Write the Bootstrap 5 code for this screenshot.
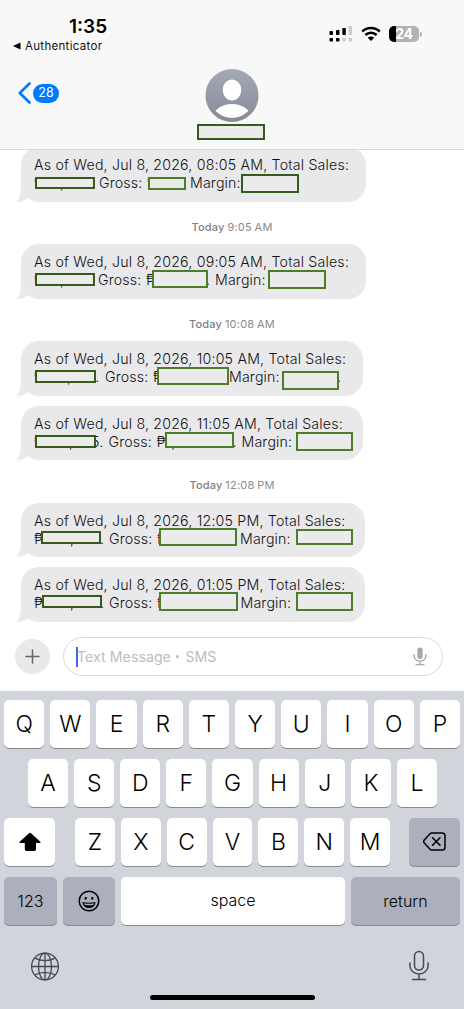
<!DOCTYPE html>
<html lang="en">
<head>
<meta charset="utf-8">
<meta name="viewport" content="width=device-width, initial-scale=1">
<title>Messages</title>
<link href="https://cdn.jsdelivr.net/npm/bootstrap@5.3.0/dist/css/bootstrap.min.css" rel="stylesheet">
<style>
body{font-family:Inter,"Liberation Sans",sans-serif;color:#111;background:#fff;width:464px;height:1009px;overflow:hidden}
svg{display:block;flex:none}
.top-bar{height:150px;background:#f8f8f8;border-bottom:1px solid #d9d9db;z-index:2}
.status{height:56px;padding:18px 42px 0 69px}
.clock{font-size:19px;font-weight:600;line-height:18px;letter-spacing:0;color:#000}
.back-app{font-size:11.5px;line-height:12px;letter-spacing:.3px;margin-left:-56px;margin-top:4px;color:#111;white-space:nowrap}
.battery{width:30px;height:16px;border-radius:5px;background:linear-gradient(90deg,#000 7px,#b2b2b4 7px);color:#fff;font-weight:700;font-size:14px;line-height:16px;letter-spacing:-.2px}
.battery-tip{width:2px;height:5px;border-radius:0 2px 2px 0;background:#b2b2b4;margin-left:1px;margin-top:-14px}
.unread{width:26px;height:19px;background:#007aff;color:#fff;font-size:12.5px;border-radius:10px}
.head-row{height:94px;padding:12px 18px 0}
.mask{border:2px solid #4e7d29;background:#ebebeb}
.mask.dark{border-color:#375a1d}
.name-mask{width:68px;height:16px;margin-top:1.5px;margin-right:1px}
.thread{height:477px;margin-top:-3px}
.bubble{background:#e9e9eb;border-radius:18px;height:54.5px;margin-left:21px;padding:9px 0 0 13px;font-size:14.2px;font-weight:350;line-height:18px;color:#111;white-space:nowrap}
.bubble .mask{position:absolute;left:var(--x);top:var(--y);width:var(--w);height:var(--h)}
.bubble .tail{position:absolute;left:-5px;bottom:0}
.first-line{width:max-content;letter-spacing:var(--ls,.19px)}
.seg{width:var(--w);flex:none;letter-spacing:.15px}
.stamp{font-size:11px;line-height:14px;color:#8a8a8e;text-align:center;height:42.5px;padding-top:18.4px;letter-spacing:.2px;word-spacing:-.5px}
.stamp b{font-weight:500;color:#808085}
.composer{height:64px;padding:10px 21px 0 15px;margin-top:3px}
.plus{width:35px;height:35px;background:#e9e9eb;margin-top:2px}
.field{width:380px;height:39px;border:1px solid #d9d9dc;border-radius:20px;padding:0 15px 0 12px;color:#bdbdc0;font-size:14.2px;margin-left:13px;letter-spacing:.02px}
.caret{width:2px;height:20px;background:#3f68f5;margin-right:-1px}
.dot{width:3px;height:3px;border-radius:50%;background:#bdbdc0;margin:0 6px 0 5.5px}
.keys{height:318px;background:#d1d4db;padding:9px 4px 0}
.key-row{height:47.5px;margin-bottom:11.6px;gap:6px}
.keycap{flex:1 1 0;height:47.5px;border-radius:5px;background:#fff;box-shadow:0 1px 0 #898a8d;font-size:23px;font-weight:300;color:#000;display:flex;align-items:center;justify-content:center}
.keycap.fn{background:#abb0bc;flex:none}
.keycap.word{font-size:16px;font-weight:350}
.keycap.space-bar{padding-bottom:2px}
.home{width:165px;height:5px;border-radius:3px;background:#000;margin:13.5px auto 0}
</style>
</head>
<body class="d-flex flex-column">
<header class="top-bar position-relative flex-shrink-0">
  <div class="status d-flex justify-content-between">
    <div>
      <div class="clock">1:35</div>
      <div class="back-app d-flex align-items-center"><svg width="8" height="8" viewBox="0 0 8 8" class="me-1"><path d="M0 4L7.5.5v7z" fill="#000"/></svg>Authenticator</div>
    </div>
    <div class="d-flex align-items-start pt-2">
      <svg width="24" height="16" viewBox="0 0 24 16"><g fill="#000"><rect x=".5" y="5" width="3.500" height="4" rx=".7"/><rect x="7" y="4" width="3.500" height="5" rx=".7"/><rect x="13.3" y="2" width="3.500" height="7" rx=".7"/><rect x=".5" y="12" width="3.500" height="3.500" rx=".7"/><rect x="7" y="12" width="3.500" height="3.500" rx=".7"/></g><g fill="#ccc"><rect x="19.6" y="0" width="3.500" height="9" rx=".7"/><rect x="13.3" y="12" width="3.500" height="3.500" rx=".7"/><rect x="19.6" y="12" width="3.500" height="3.500" rx=".7"/></g></svg>
      <svg class="mx-2" width="20" height="16" viewBox="0 0 20 16"><g fill="none" stroke="#000" stroke-width="2.500"><path d="M1.200 5.500a12.500 12.500 0 0 1 17.600 0"/><path d="M4.400 9a8 8 0 0 1 11.200 0"/></g><path d="M6.800 11.800a4.600 4.600 0 0 1 6.400 0L10 15z"/></svg>
      <div class="battery text-center">24</div><div class="battery-tip align-self-center"></div>
    </div>
  </div>
  <div class="head-row d-flex">
    <div class="d-flex align-items-center" style="height:50px;width:179px">
      <svg width="15" height="24" viewBox="0 0 15 24"><path d="M11.500 2.500L1.800 12l9.700 9.500" fill="none" stroke="#007aff" stroke-width="2.600" stroke-linecap="round" stroke-linejoin="round"/></svg>
      <span class="unread d-flex align-items-center justify-content-center">28</span>
    </div>
    <div class="d-flex flex-column align-items-center">
      <svg width="54" height="54" viewBox="0 0 54 54"><defs><linearGradient id="av" x2="0" y2="1"><stop stop-color="#a4a9b7"/><stop offset="1" stop-color="#858a96"/></linearGradient><clipPath id="inner"><circle cx="27" cy="27.300" r="22.700"/></clipPath></defs><circle cx="27" cy="27.500" r="26.500" fill="url(#av)"/><g fill="#fff"><ellipse cx="27" cy="22" rx="9.300" ry="10.500"/><ellipse cx="27" cy="49" rx="18.500" ry="13" clip-path="url(#inner)"/></g></svg>
      <div class="mask dark name-mask"></div>
    </div>
  </div>
</header>
<main class="thread flex-shrink-0">
  <div class="bubble position-relative" style="width:345px">
    <svg class="tail" width="24" height="18" viewBox="0 0 24 18"><path d="M5 0C5 10 4 15 0 17.800c5 .4 9-1 12-4L16 8z" fill="#e9e9eb"/></svg>
    <div class="first-line">As of Wed, Jul 8, 2026, 08:05 AM, Total Sales:</div>
    <div class="d-flex"><span class="seg" style="--w:26px">₱</span><span class="seg" style="--w:39px">,</span><span class="seg" style="--w:48px">Gross:</span><span class="seg" style="--w:43px">₱</span><span class="seg" style="--w:107px">Margin:</span></div>
    <i class="mask dark" style="--x:14px;--y:30px;--w:60px;--h:12px"></i><i class="mask" style="--x:127px;--y:30px;--w:38px;--h:13px"></i><i class="mask dark" style="--x:220px;--y:27px;--w:58px;--h:19px"></i>
  </div>
  <div class="stamp"><b>Today</b> 9:05 AM</div>
  <div class="bubble position-relative" style="width:345px">
    <svg class="tail" width="24" height="18" viewBox="0 0 24 18"><path d="M5 0C5 10 4 15 0 17.800c5 .4 9-1 12-4L16 8z" fill="#e9e9eb"/></svg>
    <div class="first-line">As of Wed, Jul 8, 2026, 09:05 AM, Total Sales:</div>
    <div class="d-flex"><span class="seg" style="--w:26px">₱</span><span class="seg" style="--w:38px">,</span><span class="seg" style="--w:48px">Gross:</span><span class="seg" style="--w:60px">₱</span><span class="seg" style="--w:9px">.</span><span class="seg">Margin:</span></div>
    <i class="mask dark" style="--x:14px;--y:29px;--w:60px;--h:13px"></i><i class="mask" style="--x:131px;--y:26px;--w:56px;--h:18px"></i><i class="mask" style="--x:247px;--y:26px;--w:57.5px;--h:19px"></i>
  </div>
  <div class="stamp"><b>Today</b> 10:08 AM</div>
  <div class="bubble position-relative" style="width:342px">
    <svg class="tail" width="24" height="18" viewBox="0 0 24 18"><path d="M5 0C5 10 4 15 0 17.800c5 .4 9-1 12-4L16 8z" fill="#e9e9eb"/></svg>
    <div class="first-line">As of Wed, Jul 8, 2026, 10:05 AM, Total Sales:</div>
    <div class="d-flex"><span class="seg" style="--w:33px">₱</span><span class="seg" style="--w:20px">,</span><span class="seg" style="--w:18px">5.</span><span class="seg" style="--w:48px">Gross:</span><span class="seg" style="--w:76px">₱</span><span class="seg" style="--w:108px">Margin:</span><span class="seg">.</span></div>
    <i class="mask dark" style="--x:14px;--y:29px;--w:60.5px;--h:13px"></i><i class="mask" style="--x:136px;--y:26px;--w:72px;--h:18px"></i><i class="mask" style="--x:260.5px;--y:30px;--w:57px;--h:19px"></i>
  </div>
  <div class="bubble position-relative" style="width:341.5px;margin-top:10px">
    <svg class="tail" width="24" height="18" viewBox="0 0 24 18"><path d="M5 0C5 10 4 15 0 17.800c5 .4 9-1 12-4L16 8z" fill="#e9e9eb"/></svg>
    <div class="first-line">As of Wed, Jul 8, 2026, 11:05 AM, Total Sales:</div>
    <div class="d-flex"><span class="seg" style="--w:35px">₱</span><span class="seg" style="--w:22px">,</span><span class="seg" style="--w:17.5px">5.</span><span class="seg" style="--w:48px">Gross:</span><span class="seg" style="--w:15px">₱</span><span class="seg" style="--w:61px">,</span><span class="seg" style="--w:9px">.</span><span class="seg">Margin:</span></div>
    <i class="mask dark" style="--x:14px;--y:29px;--w:60.5px;--h:13px"></i><i class="mask" style="--x:144px;--y:26px;--w:69px;--h:16px"></i><i class="mask" style="--x:275px;--y:26px;--w:57px;--h:19px"></i>
  </div>
  <div class="stamp"><b>Today</b> 12:08 PM</div>
  <div class="bubble position-relative" style="width:344px">
    <svg class="tail" width="24" height="18" viewBox="0 0 24 18"><path d="M5 0C5 10 4 15 0 17.800c5 .4 9-1 12-4L16 8z" fill="#e9e9eb"/></svg>
    <div class="first-line">As of Wed, Jul 8, 2026, 12:05 PM, Total Sales:</div>
    <div class="d-flex"><span class="seg" style="--w:36px">₱</span><span class="seg" style="--w:30px">,</span><span class="seg" style="--w:9px">.</span><span class="seg" style="--w:48px">Gross:</span><span class="seg" style="--w:83px">₱</span><span class="seg">Margin:</span></div>
    <i class="mask dark" style="--x:20px;--y:28.5px;--w:60px;--h:13px"></i><i class="mask" style="--x:138px;--y:25.5px;--w:78px;--h:18px"></i><i class="mask" style="--x:275px;--y:26.5px;--w:57px;--h:16px"></i>
  </div>
  <div class="bubble position-relative" style="width:344px;margin-top:10px">
    <svg class="tail" width="24" height="18" viewBox="0 0 24 18"><path d="M5 0C5 10 4 15 0 17.800c5 .4 9-1 12-4L16 8z" fill="#e9e9eb"/></svg>
    <div class="first-line">As of Wed, Jul 8, 2026, 01:05 PM, Total Sales:</div>
    <div class="d-flex"><span class="seg" style="--w:36px">₱</span><span class="seg" style="--w:30px">,</span><span class="seg" style="--w:9px">.</span><span class="seg" style="--w:48px">Gross:</span><span class="seg" style="--w:83.5px">₱</span><span class="seg">Margin:</span></div>
    <i class="mask dark" style="--x:21px;--y:28px;--w:60px;--h:13px"></i><i class="mask" style="--x:138px;--y:25px;--w:79px;--h:19px"></i><i class="mask" style="--x:275px;--y:24.5px;--w:57px;--h:19px"></i>
  </div>
</main>
<div class="composer d-flex align-items-start flex-shrink-0">
  <div class="plus rounded-circle d-flex align-items-center justify-content-center"><svg width="15" height="15" viewBox="0 0 15 15"><path d="M7.500 1v13M1 7.500h13" stroke="#66666a" stroke-width="1.500" stroke-linecap="round"/></svg></div>
  <div class="field d-flex align-items-center"><span class="caret"></span><span>Text Message</span><span class="dot"></span><span>SMS</span>
    <svg class="ms-auto" width="14" height="19" viewBox="0 0 14 19"><rect x="4.300" y=".5" width="5.400" height="11.500" rx="2.700" fill="#a5a8b0"/><path d="M1.200 7.700v1.500a5.800 5 0 0 0 11.600 0V7.700M7 14.300v3M3 17.600h8" fill="none" stroke="#a5a8b0" stroke-width="1.300" stroke-linecap="round"/></svg></div>
</div>
<section class="keys flex-shrink-0">
  <div class="key-row d-flex"><span class="keycap">Q</span><span class="keycap">W</span><span class="keycap">E</span><span class="keycap">R</span><span class="keycap">T</span><span class="keycap">Y</span><span class="keycap">U</span><span class="keycap">I</span><span class="keycap">O</span><span class="keycap">P</span></div>
  <div class="key-row d-flex" style="padding:0 23px 0 24px"><span class="keycap">A</span><span class="keycap">S</span><span class="keycap">D</span><span class="keycap">F</span><span class="keycap">G</span><span class="keycap">H</span><span class="keycap">J</span><span class="keycap">K</span><span class="keycap">L</span></div>
  <div class="key-row d-flex">
    <span class="keycap flex-grow-0 flex-shrink-0" style="flex-basis:51px;margin-right:14px"><svg width="22" height="20" viewBox="0 0 22 20"><path d="M10 1.300q1-.9 2 0l9.300 8.500q.9 1-.4 1.200H17v6.300q0 1.700-1.700 1.700H7.500q-1.700 0-1.700-1.700V11H1.100q-1.300-.2-.4-1.200z" fill="#000"/></svg></span>
    <span class="keycap">Z</span><span class="keycap">X</span><span class="keycap">C</span><span class="keycap">V</span><span class="keycap">B</span><span class="keycap">N</span><span class="keycap">M</span>
    <span class="keycap fn" style="width:51px;margin-left:13px"><svg width="23" height="19" viewBox="0 0 23 19"><path d="M8.800 1h10.400Q22 1 22 3.800v11.400q0 2.800-2.800 2.800H8.800q-1 0-1.800-.8L1.300 11q-1.300-1.500 0-3L7 1.800Q7.800 1 8.800 1z" fill="none" stroke="#000" stroke-width="1.500"/><path d="M9.600 5.800l7.400 7.400M17 5.800l-7.400 7.400" stroke="#000" stroke-width="1.600" stroke-linecap="round"/></svg></span>
  </div>
  <div class="key-row d-flex mb-0">
    <span class="keycap fn word" style="width:53px">123</span>
    <span class="keycap fn" style="width:52px"><svg width="22" height="22" viewBox="0 0 22 22"><circle cx="11" cy="11" r="9.800" fill="none" stroke="#000" stroke-width="1.500"/><ellipse cx="7.700" cy="8.200" rx="1.200" ry="1.500"/><ellipse cx="14.300" cy="8.200" rx="1.200" ry="1.500"/><path d="M4.400 12q6.600 1.600 13.200 0-.8 6-6.600 6T4.400 12z"/><path d="M5.900 13.300q5.100 1 10.200 0l-.6 1.400q-4.500 1-9 0z" fill="#abb0bc"/></svg></span>
    <span class="keycap word space-bar">space</span>
    <span class="keycap fn word" style="width:109px">return</span>
  </div>
  <div class="d-flex justify-content-between" style="padding:25px 31px 0 26px">
    <svg width="30" height="32" viewBox="0 0 30 32"><g fill="none" stroke="#474a50" stroke-width="1.300"><circle cx="15" cy="16.500" r="13.400"/><ellipse cx="15" cy="16.500" rx="6.500" ry="13.400"/><path d="M15 3v27M1.500 16.500h27M4.800 8.200q10.200 5 20.400 0M4.800 24.800q10.200-5 20.400 0"/></g></svg>
    <svg width="20" height="31" viewBox="0 0 20 31"><g fill="none" stroke="#474a50" stroke-width="1.500" stroke-linecap="round"><rect x="5.500" y="1.500" width="9" height="18.500" rx="4.500"/><path d="M.9 13v2.500a9.100 8.600 0 0 0 18.200 0V13M10 24.200v5.300M3.500 29.600h13"/></g></svg>
  </div>
  <div class="home"></div>
</section>
<script src="https://cdn.jsdelivr.net/npm/bootstrap@5.3.0/dist/js/bootstrap.bundle.min.js"></script>
</body>
</html>
